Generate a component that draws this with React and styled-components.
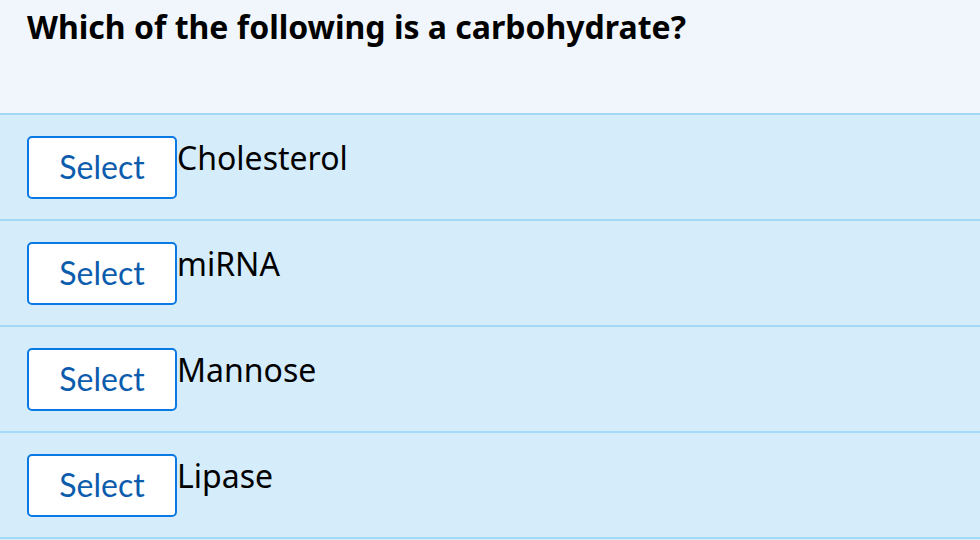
import React from 'react';
import styled, {createGlobalStyle} from 'styled-components';

const GlobalStyle = createGlobalStyle `
    body {
        margin: 0;
        background: #d5ecfa;
        font-family: "Noto Sans", "Open Sans", sans-serif;
    }
`

const Page = styled.div `
    width: 980px;
    height: 540px;
    overflow: hidden;
`

const Header = styled.div `
    height: 115px;
    box-sizing: border-box;
    padding: 5px 27px 0;
    background: #f0f6fb;
    border-bottom: 2px solid #a3d9f7;
`

const Question = styled.h1 `
    margin: 0;
    font-family: "Noto Sans", sans-serif;
    font-size: 32px;
    font-weight: 700;
    color: #000;
`

const Options = styled.ul `
    list-style: none;
    margin: 0;
    padding: 0;
`

const Option = styled.li `
    display: flex;
    align-items: flex-start;
    height: 106px;
    box-sizing: border-box;
    padding: 21px 27px 0;
    background: #d5ecfa;
    border-bottom: 2px solid #a3d9f7;
`

const SelectButton = styled.button `
    display: flex;
    align-items: center;
    justify-content: center;
    width: 150px;
    height: 63px;
    box-sizing: border-box;
    margin: 0;
    padding: 0 0 2px;
    background: #fff;
    border: 2px solid #0a79e4;
    border-radius: 5px;
    font-family: Lato, sans-serif;
    font-size: 32px;
    color: #0b5cad;
    cursor: pointer;
`

const Label = styled.span `
    font-family: "Noto Sans", sans-serif;
    font-size: 32px;
    color: #000;
`

const answers = ['Cholesterol', 'miRNA', 'Mannose', 'Lipase']

const App = () => (
    <Page>
        <GlobalStyle/>
        <Header>
            <Question>Which of the following is a carbohydrate?</Question>
        </Header>
        <Options>
            {answers.map((answer) => (
                <Option key={answer}>
                    <SelectButton type="button">Select</SelectButton>
                    <Label>{answer}</Label>
                </Option>
            ))}
        </Options>
    </Page>
)

export default App
